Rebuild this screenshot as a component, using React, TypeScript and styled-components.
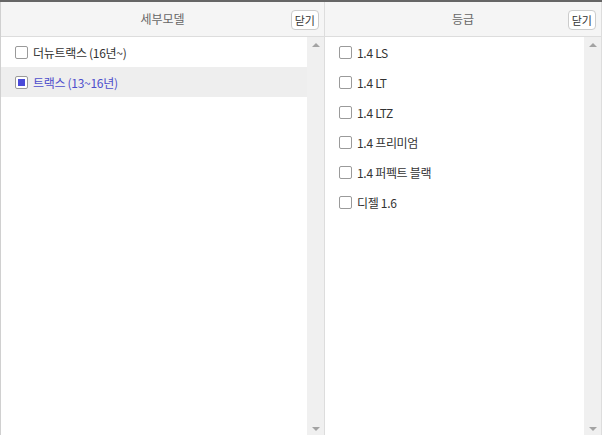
import React from 'react';
import styled, {createGlobalStyle} from 'styled-components';

const GlobalStyle = createGlobalStyle`
    html, body {
        margin: 0;
        padding: 0;
        background: #ffffff;
    }
    body {
        font-family: "Noto Sans CJK KR", "Noto Sans", sans-serif;
        font-size: 12px;
        color: #333333;
    }
`;

const Wrapper = styled.div`
    display: flex;
    width: 602px;
    height: 435px;
    border-top: 2px solid #666666;
    box-sizing: border-box;
    overflow: hidden;
`;

const Panel = styled.section<{$width: number; $first?: boolean}>`
    display: flex;
    flex-direction: column;
    width: ${(p) => p.$width}px;
    box-sizing: border-box;
    border-left: ${(p) => (p.$first ? '1px solid #d0d0d0' : 'none')};
    border-right: 1px solid #dddddd;
`;

const Header = styled.header`
    position: relative;
    display: flex;
    align-items: center;
    justify-content: center;
    height: 34px;
    flex-shrink: 0;
    background: #f5f5f5;
    border-bottom: 1px solid #dddddd;
`;

const Title = styled.h3`
    margin: 0;
    font-size: 12px;
    font-weight: 400;
    color: #666666;
    line-height: 16px;
`;

const CloseButton = styled.button`
    position: absolute;
    right: 5px;
    top: 8px;
    height: 20px;
    padding: 0 3px;
    font-family: inherit;
    font-size: 11px;
    line-height: 16px;
    color: #333333;
    background: #ffffff;
    border: 1px solid #cccccc;
    border-radius: 4px;
`;

const Body = styled.div`
    display: flex;
    flex: 1;
    min-height: 0;
`;

const List = styled.ul`
    flex: 1;
    margin: 0;
    padding: 0;
    list-style: none;
`;

const Row = styled.li<{$selected?: boolean}>`
    display: flex;
    align-items: center;
    gap: 5px;
    height: 30px;
    padding-left: 14px;
    background: ${(p) => (p.$selected ? '#eeeeee' : 'transparent')};
    color: ${(p) => (p.$selected ? '#4d4dcc' : '#333333')};
    font-size: 12px;
    letter-spacing: -0.3px;
`;

const Check = styled.span<{$checked?: boolean}>`
    position: relative;
    width: 11px;
    height: 11px;
    flex-shrink: 0;
    border: 1px solid #9a9a9a;
    border-radius: 2px;
    background: #ffffff;

    &::after {
        content: '';
        display: ${(p) => (p.$checked ? 'block' : 'none')};
        position: absolute;
        left: 2px;
        top: 2px;
        width: 7px;
        height: 7px;
        background: #4a4ad8;
    }
`;

const Scrollbar = styled.div`
    display: flex;
    flex-direction: column;
    justify-content: space-between;
    align-items: center;
    width: 17px;
    flex-shrink: 0;
    background: #f0f0f0;
    padding: 6px 0 4px;
    box-sizing: border-box;
`;

const Arrow = styled.span<{$down?: boolean}>`
    width: 0;
    height: 0;
    border-left: 4px solid transparent;
    border-right: 4px solid transparent;
    ${(p) => (p.$down ? 'border-top: 4px solid #a3a3a3;' : 'border-bottom: 4px solid #a3a3a3;')}
`;

type Item = {label: string; checked?: boolean};

const models: Item[] = [
    {label: '더뉴트랙스 (16년~)'},
    {label: '트랙스 (13~16년)', checked: true},
];

const grades: Item[] = [
    {label: '1.4 LS'},
    {label: '1.4 LT'},
    {label: '1.4 LTZ'},
    {label: '1.4 프리미엄'},
    {label: '1.4 퍼펙트 블랙'},
    {label: '디젤 1.6'},
];

const SelectPanel = ({title, items, width, first}: {title: string; items: Item[]; width: number; first?: boolean}) => (
    <Panel
        $width={width}
        $first={first}
    >
        <Header>
            <Title>{title}</Title>
            <CloseButton>닫기</CloseButton>
        </Header>
        <Body>
            <List>
                {items.map((item) => (
                    <Row
                        key={item.label}
                        $selected={item.checked}
                    >
                        <Check $checked={item.checked}/>
                        {item.label}
                    </Row>
                ))}
            </List>
            <Scrollbar>
                <Arrow/>
                <Arrow $down={true}/>
            </Scrollbar>
        </Body>
    </Panel>
);

export default function App() {
    return (
        <>
            <GlobalStyle/>
            <Wrapper>
                <SelectPanel
                    title='세부모델'
                    items={models}
                    width={325}
                    first={true}
                />
                <SelectPanel
                    title='등급'
                    items={grades}
                    width={277}
                />
            </Wrapper>
        </>
    );
}
